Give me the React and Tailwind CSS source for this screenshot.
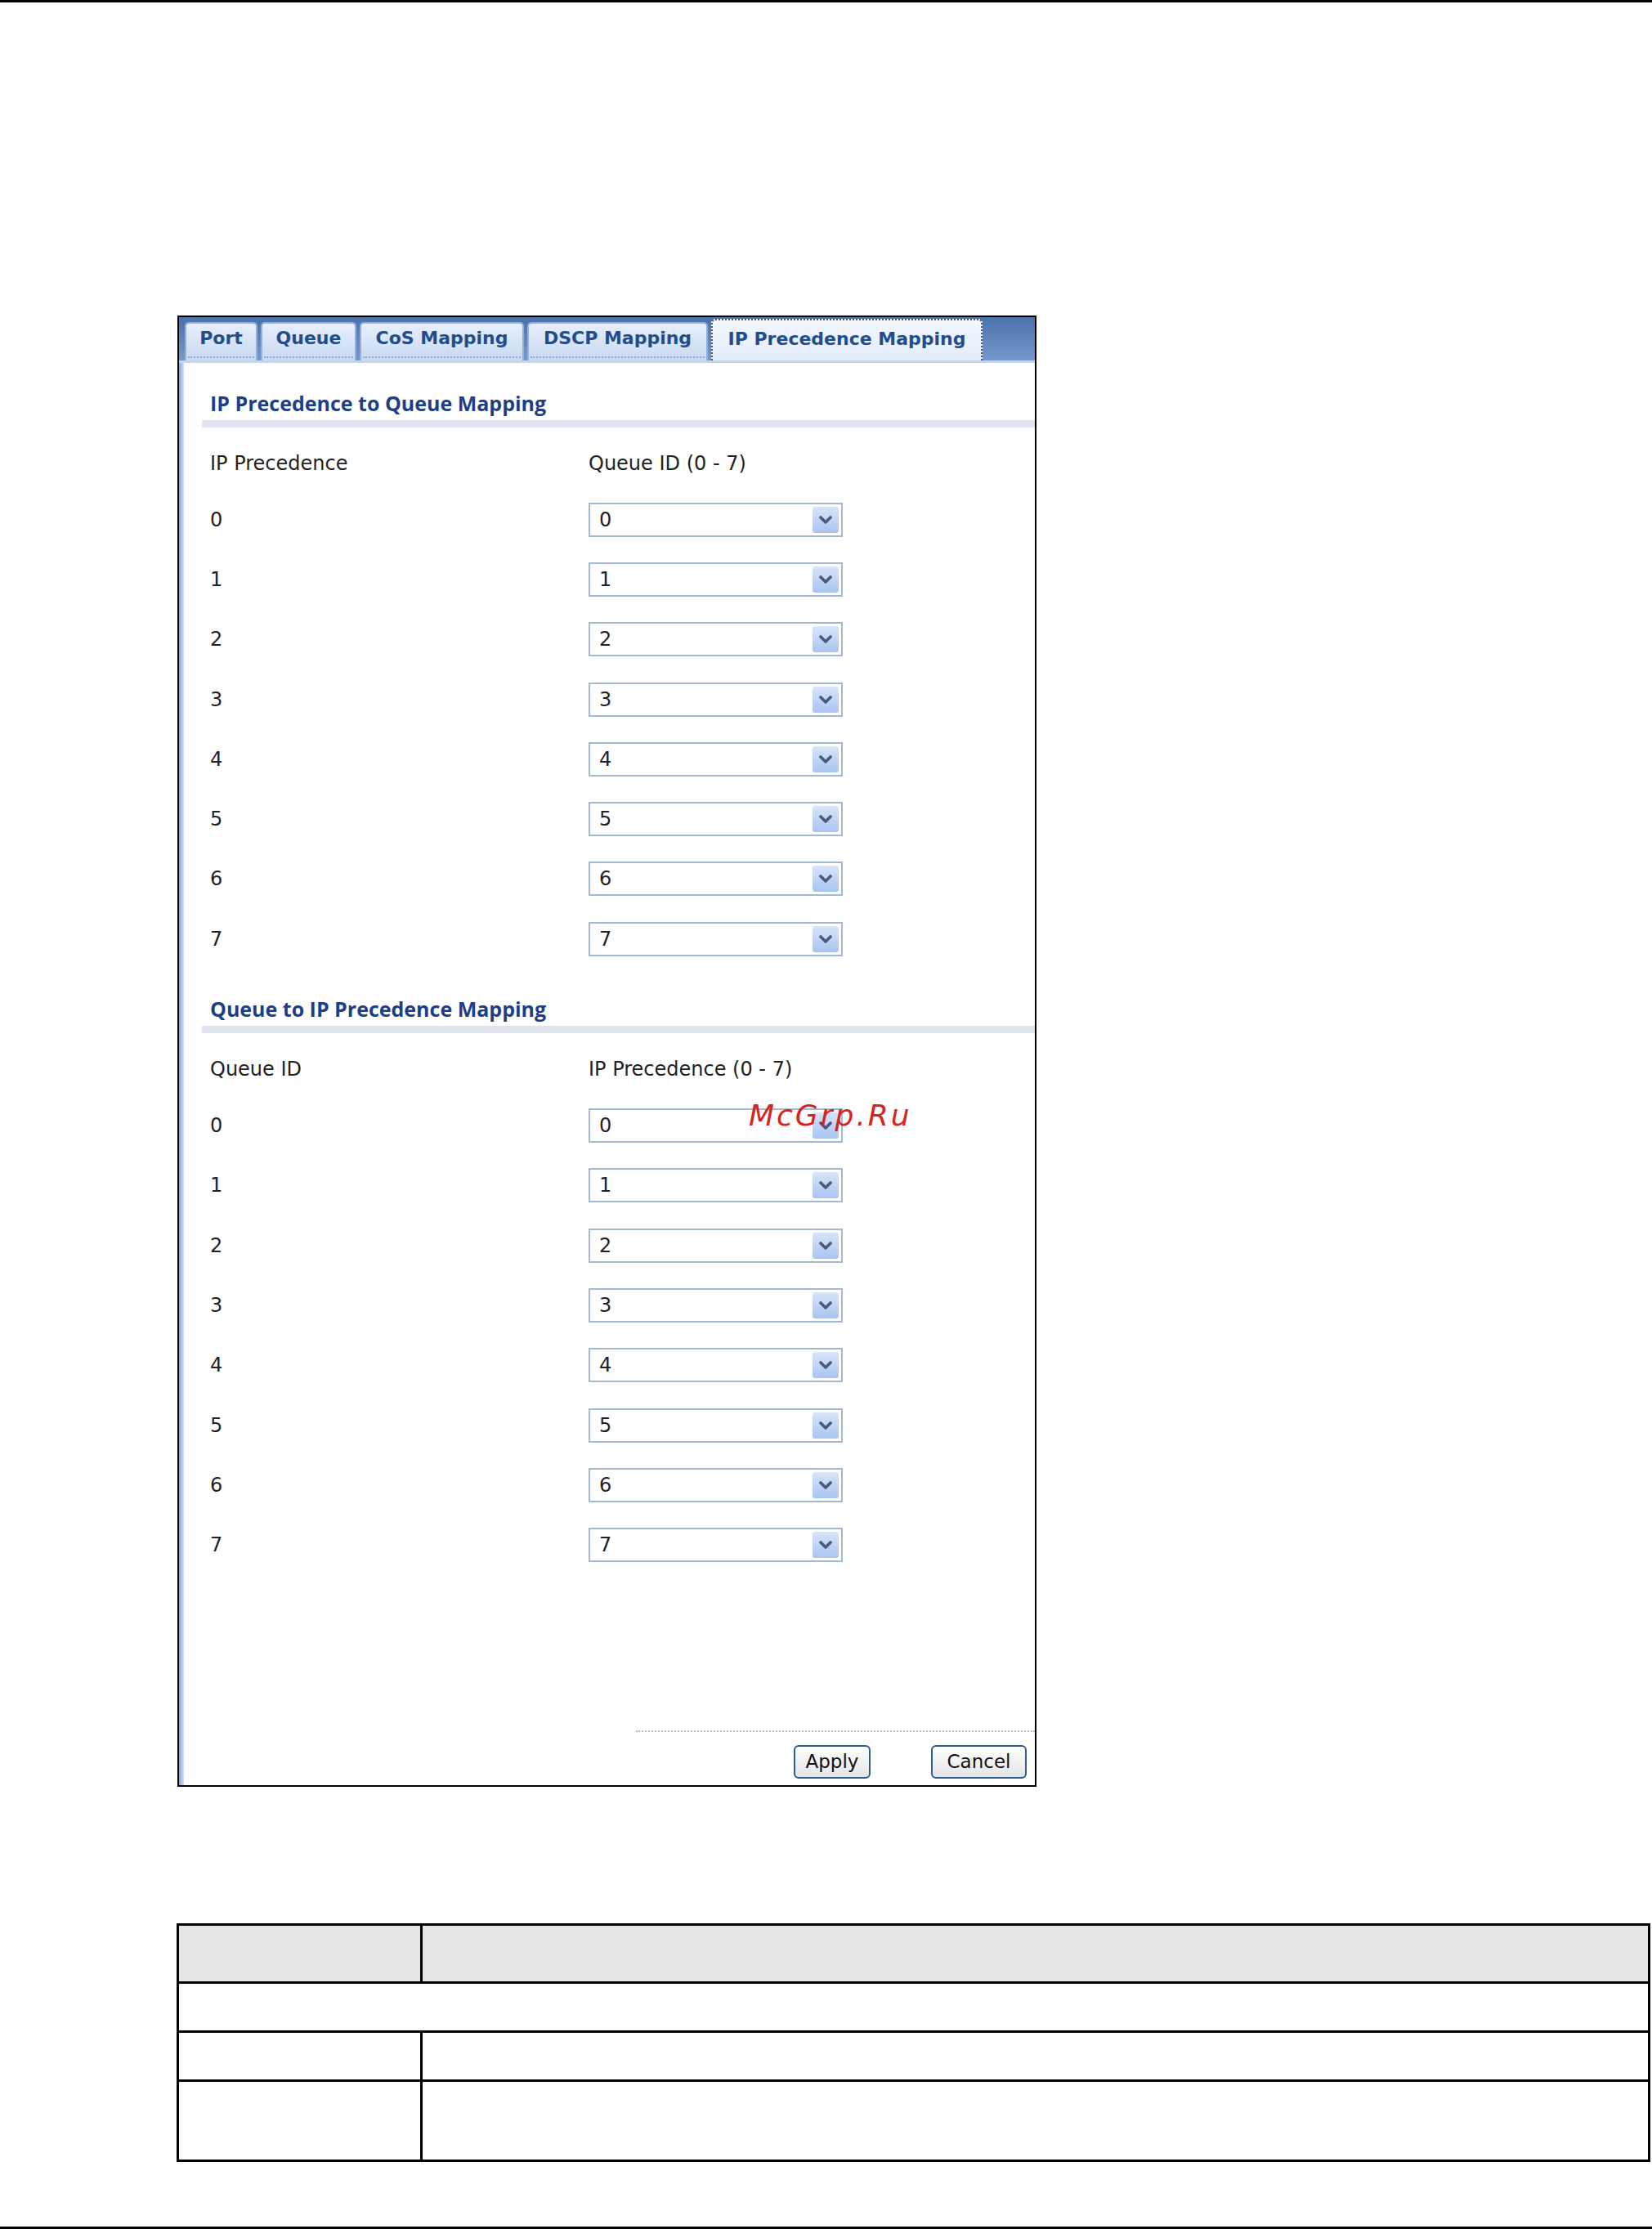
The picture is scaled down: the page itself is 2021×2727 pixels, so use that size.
import React from "react";

const tabs = [
  { label: "Port", w: "w-[89px]" },
  { label: "Queue", w: "w-[117px]" },
  { label: "CoS Mapping", w: "w-[201px]" },
  { label: "DSCP Mapping", w: "w-[221px]" },
];

const values = [0, 1, 2, 3, 4, 5, 6, 7];

function Chevron() {
  return (
    <svg width="18" height="12" viewBox="0 0 18 12">
      <path
        d="M3 3 L9 9 L15 3"
        fill="none"
        stroke="#4a5b7a"
        strokeWidth="3.6"
        strokeLinecap="round"
        strokeLinejoin="round"
      />
    </svg>
  );
}

function Select({ value }) {
  return (
    <div className="w-[311px] h-[42px] border-2 border-[#a4b8cf] bg-white flex items-center justify-between pl-[11px] pr-[3px]">
      <span className="text-[24px] leading-none text-[#222]">{value}</span>
      <div className="w-[32px] h-[32px] rounded-[3px] bg-linear-to-b from-[#d8e5fa] to-[#a8c4f1] flex items-center justify-center">
        <Chevron />
      </div>
    </div>
  );
}

function Section({ title, left, right }) {
  return (
    <div className="pt-[34px]">
      <div className="pl-[32px] h-[30px] leading-[30px] font-['Open_Sans',sans-serif] font-bold text-[25px] text-[#1d3f87]">
        {title}
      </div>
      <div className="ml-[22px] mt-[6px] h-[9px] bg-[#dfe4ee]" />
      <div className="mt-[7px] h-[69px] flex items-center pt-[5px] pl-[32px] text-[24px] text-[#222]">
        <div className="w-[463px]">{left}</div>
        <div>{right}</div>
      </div>
      {values.map((v) => (
        <div key={v} className="h-[73.3px] flex items-center pl-[32px]">
          <div className="w-[463px] text-[24px] text-[#222]">{v}</div>
          <Select value={v} />
        </div>
      ))}
    </div>
  );
}

function Button({ children, w }) {
  return (
    <div
      className={`${w} h-[41px] rounded-[6px] border-2 border-[#2d5b8e] bg-linear-to-b from-white to-[#e4e4e4] flex items-center justify-center text-[23px] text-[#111]`}
    >
      {children}
    </div>
  );
}

export default function App() {
  return (
    <div className="relative w-[2021px] h-[2727px] bg-white flex flex-col font-['DejaVu_Sans',sans-serif]">
      <div className="h-[3px] w-full bg-black" />
      <div className="flex-1 pl-[216px] pt-[383px]">
        {/* Screenshot frame */}
        <div className="ml-[1px] w-[1051px] h-[1800px] border-2 border-black flex flex-col bg-white">
          <div className="h-[53px] bg-linear-to-b from-[#4a72ab] to-[#7598cb] flex items-end pl-[7px] gap-[4px]">
            {tabs.map((t) => (
              <div
                key={t.label}
                className={`${t.w} h-[47px] rounded-t-[5px] border-2 border-b-0 border-[#93afda] bg-linear-to-b from-[#e6eefb] to-[#c9daf2] flex flex-col`}
              >
                <div className="flex-1 flex items-center justify-center pb-[6px] text-[22px] font-bold text-[#214d8c]">
                  {t.label}
                </div>
                <div className="mx-[2px] mb-[3px] border-t-2 border-dotted border-[#8ea7cf]" />
              </div>
            ))}
            <div className="w-[332px] h-[51px] rounded-t-[5px] border-2 border-b-0 border-dotted border-[#5f5a4e] bg-linear-to-b from-[#f3f7fe] to-[#e2ecfb] flex items-center justify-center pb-[4px] text-[22px] font-bold text-[#214d8c]">
              IP Precedence Mapping
            </div>
          </div>
          <div className="h-[3px] bg-[#c3d5ef]" />
          <div className="flex-1 flex">
            <div className="w-[6px] bg-linear-to-r from-[#84a8df] to-[#d2e2f7]" />
            <div className="flex-1 flex flex-col">
              <Section
                title="IP Precedence to Queue Mapping"
                left="IP Precedence"
                right="Queue ID (0 - 7)"
              />
              <Section
                title="Queue to IP Precedence Mapping"
                left="Queue ID"
                right="IP Precedence (0 - 7)"
              />
              <div className="flex-1" />
              <div className="ml-[553px] border-t-2 border-dotted border-[#b9b9b9]" />
              <div className="mt-[16px] mb-[8px] flex justify-end gap-[74px] pr-[10px]">
                <Button w="w-[94px]">Apply</Button>
                <Button w="w-[117px]">Cancel</Button>
              </div>
            </div>
          </div>
        </div>

        {/* Table */}
        <div className="mt-[167px] w-[1803px] h-[292px] border-[3px] border-black flex flex-col">
          <div className="h-[71px] border-b-[3px] border-black flex bg-[#e5e5e5]">
            <div className="w-[298px] border-r-[3px] border-black" />
            <div className="flex-1" />
          </div>
          <div className="h-[60px] border-b-[3px] border-black" />
          <div className="h-[60px] border-b-[3px] border-black flex">
            <div className="w-[298px] border-r-[3px] border-black" />
            <div className="flex-1" />
          </div>
          <div className="flex-1 flex">
            <div className="w-[298px] border-r-[3px] border-black" />
            <div className="flex-1" />
          </div>
        </div>
      </div>
      <div className="h-[3px] w-full bg-black" />

      {/* Watermark */}
      <div className="absolute left-[916px] top-[1344px] leading-[42px] text-[36px] italic tracking-[3px] text-[#d7241f]">
        McGrp.Ru
      </div>
    </div>
  );
}
